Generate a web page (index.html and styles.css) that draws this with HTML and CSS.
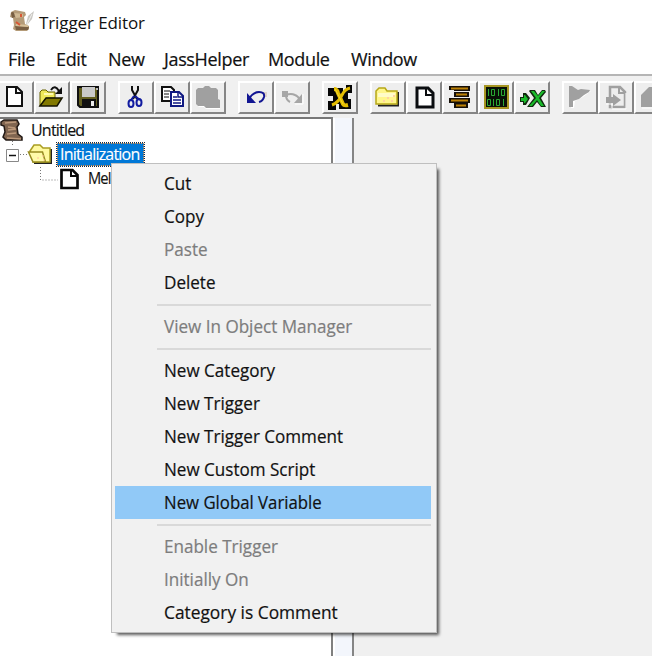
FILE: index.html
```html
<!DOCTYPE html>
<html lang="en">
<head>
<meta charset="utf-8">
<title>Trigger Editor</title>
<link rel="stylesheet" href="styles.css">
</head>
<body>
<div class="window">
  <header class="titlebar">
    <svg class="app-icon" width="26" height="26" viewBox="0 0 26 26"><path d="M17 15l2-8 6-5-2 8-5 6z" fill="#c9c7c2"/><path d="M18 15l5-10" stroke="#f1f0ed"/><path d="M2 3l4-2 10 2 1 3-2 2 1 7 4 2v3l-2 2H7l-3-2 1-4-1-7-3-1z" fill="#b49b78"/><path d="M5 4l9 1v3l-7 1z" fill="#d0b994"/><path d="M2 4q2-2 3 0l1 4-3 1zM6 17l14 1-1 3H7z" fill="#795f43"/><path d="M7 16l12 1" stroke="#d7c099" stroke-width="2"/><path d="M12 5v3M7 13l4 3" stroke="#d95735" stroke-width="2"/></svg>
    <span>Trigger Editor</span>
  </header>
  <nav class="menubar">
    <span class="m-file">File</span><span class="m-edit">Edit</span><span class="m-new">New</span><span class="m-jass">JassHelper</span><span class="m-module">Module</span><span class="m-window">Window</span>
  </nav>
  <div class="toolbar">
    <div class="group">
      <button class="tool"><svg viewBox="0 0 36 33"><path d="M9 6h10l5 5v14H9z" fill="#fff" stroke="#111" stroke-width="2"/><path d="M18 6v6h6" fill="none" stroke="#111" stroke-width="2"/></svg></button>
      <button class="tool"><svg viewBox="0 0 36 33"><path d="M6 25V11l2-2h4l2 2h7v6H12z" fill="#eee85a" stroke="#666000"/><path d="M10 12h9v2h-9z" fill="#fffbb0"/><path d="M6 25l6-8h16l-5 8z" fill="#827900" stroke="#161500" stroke-width="1.5"/><path d="M17 9q4-6 8 1" fill="none" stroke="#111" stroke-width="2"/><path d="M28 6v7h-7z" fill="#111"/></svg></button>
      <button class="tool"><svg viewBox="0 0 36 33"><path d="M8 6h20v20H10l-2-2z" fill="#625e20" stroke="#111" stroke-width="2"/><path d="M12 6h13v10H12z" fill="#c9c9c9"/><path d="M12 18h14v8H12z" fill="#111"/><path d="M21 20h3v5h-3z" fill="#eee"/><path d="M26 7h2v2h-2z" fill="#bbb"/></svg></button>
    </div>
    <div class="group">
      <button class="tool"><svg viewBox="0 0 36 33"><path d="M14 5v4l5 9M20 5v4l-5 9" fill="none" stroke="#111" stroke-width="2"/><path d="M16 15l-3 4M17 15l5 4" stroke="#111ba0" stroke-width="2"/><ellipse cx="13" cy="22.500" rx="2.500" ry="3.500" fill="none" stroke="#111ba0" stroke-width="2"/><ellipse cx="21" cy="21.500" rx="2.500" ry="3.500" fill="none" stroke="#111ba0" stroke-width="2"/></svg></button>
      <button class="tool"><svg viewBox="0 0 36 33"><path d="M8 6h9l3 3v11H8z" fill="#fff" stroke="#111" stroke-width="2"/><path d="M10 10h6M10 13h5M10 16h5" stroke="#111"/><path d="M17 11h8l4 4v10H17z" fill="#fff" stroke="#101982" stroke-width="2"/><path d="M24 11v5h5M19 16h4M19 19h8M19 22h8" fill="none" stroke="#101982" stroke-width="1.500"/></svg></button>
      <button class="tool"><svg viewBox="0 0 36 33"><path d="M8 9h5l2-2h5l2 2h6v10h2v9H16l-2-2H9l-2-2V9z" fill="#fff"/><path d="M8 7h5l2-2h4l2 2h5l2 2v9l2 1v8H16l-2-2H8l-2-2V9z" fill="#a0a0a0"/></svg></button>
    </div>
    <div class="group">
      <button class="tool"><svg viewBox="0 0 36 33"><path d="M25 11h4v5h-2z" fill="#dfd2ca"/><path d="M11 18q4-7 10-7 6 0 5 5-1 4-5 5" fill="none" stroke="#111592" stroke-width="2"/><path d="M9 12v10h9z" fill="#111592"/></svg></button>
      <button class="tool"><svg viewBox="0 0 36 33"><path d="M12 14q5-2 9 0 3 1 5 5M12 14q0 5 4 7" fill="none" stroke="#a6a6a6" stroke-width="2"/><path d="M8 10h6v6H8zM28 13v9h-8z" fill="#a6a6a6"/><path d="M21 23h8V13" fill="none" stroke="#fff"/></svg></button>
    </div>
    <div class="group">
      <button class="tool"><svg viewBox="0 0 36 33"><path d="M6 7h15v4h3V4h6v8h-4v6h3v10H17v-5h-3v6H6v-9h5v-5H6z" fill="#050505"/><path d="M12 8q3 0 4 4l5 11q1 2 5 1" fill="none" stroke="#e4bd00" stroke-width="4"/><path d="M28 7q-5 1-8 7-4 8-10 10" fill="none" stroke="#e4bd00" stroke-width="3"/><path d="M13 8l8 15" fill="none" stroke="#f4da31"/></svg></button>
    </div>
    <div class="group">
      <button class="tool"><svg viewBox="0 0 36 33"><path d="M8 24.500h20V11" fill="none" stroke="#222" stroke-width="2"/><path d="M6 23V10l3-3h6l2 3h10v13z" fill="#fff68c" stroke="#b7a817" stroke-width="1.500"/><path d="M8 12h17v4H8z" fill="#fffbc8"/><path d="M13 20h2m2-3h2m2 3h2m0-5h2" stroke="#ffd2a0" stroke-width="2"/></svg></button>
      <button class="tool"><svg viewBox="0 0 36 33"><path d="M11 7h11l5 5v14H11z" fill="#fff" stroke="#0b0d10" stroke-width="3"/><path d="M20 7v7h7" fill="none" stroke="#0b0d10" stroke-width="2"/></svg></button>
      <button class="tool"><svg viewBox="0 0 36 33"><path d="M7 5h21v5H12V9H7zM12 11h15v5H12zM7 17h21v5H7zM12 22h14v5H12z" fill="#16100a"/><path d="M9 6.500h17v2H9zM14 12.500h11v2H14zM9 18.500h17v2H9zM14 23.500h10v2H14z" fill="#bd8207"/></svg></button>
      <button class="tool"><svg viewBox="0 0 36 33"><path d="M7 5h23v22H7z" fill="#081006" stroke="#a69621" stroke-width="2"/><path d="M10.500 8v7M13.500 8.500h3v6h-3zM20.500 8v7M23.500 8.500h3v6h-3zM9.500 18.500h3v6h-3zM15.500 18v7M18.500 18.500h3v6h-3zM25.500 18v7" fill="none" stroke="#28a832"/></svg></button>
      <button class="tool"><svg viewBox="0 0 36 33"><path d="M16 9h5l3 5 4-5h3l1 2-5 6 5 9h-5l-4-5-4 5h-6l7-9-5-7z" fill="#102b0f"/><path d="M17 10h3l4 5 4-5h3l-6 7 5 8h-3l-4-6-5 6h-3l7-8z" fill="#19bb2a"/><path d="M9 12h3l4 5-4 7H9v-3H6v-5h3z" fill="#102b0f"/><path d="M10 14h1l3 4-3 4h-1v-2H7v-3h3z" fill="#19bb2a"/></svg></button>
    </div>
    <div class="group">
      <button class="tool"><svg viewBox="0 0 36 33"><path d="M9 7h3l6 3h11l-8 6-8 4-1 7H9z" fill="#fff"/><path d="M7 5h3l6 4 3-1 9 1-1 2-5 3-5 4-6 2v6H7z" fill="#a0a0a0"/></svg></button>
      <button class="tool"><svg viewBox="0 0 36 33"><path d="M12 6h10l5 5v15H12z" fill="#eee" stroke="#a0a0a0" stroke-width="2.500"/><path d="M21 6v6h6" fill="none" stroke="#a0a0a0" stroke-width="2"/><path d="M8 16h7v-3l8 6-8 6v-3H8z" fill="#a0a0a0"/><path d="M8 23h6v4M14 28h14V12" fill="none" stroke="#fff"/></svg></button>
      <button class="tool"><svg viewBox="0 0 36 33"><path d="M7 14l8-8h9v20H7z" fill="#a0a0a0"/><path d="M8 27h16" stroke="#fff"/></svg></button>
    </div>
  </div>
  <main class="workspace">
    <section class="tree">
      <div class="row root"><svg width="26" height="24" viewBox="0 0 26 24"><path d="M1 3l3-2h13l2 4-2 3 1 7 4 3v3H6l-3-3 2-5-1-6-3-1z" fill="#806550" stroke="#211915" stroke-width="1.500"/><path d="M5 4l11-1M8 8l7 1M8 11l8-1M7 15l9-1M7 19l14 1" stroke="#bd9a7c" stroke-width="1.500"/></svg><span>Untitled</span></div>
      <div class="row category"><svg width="54" height="26" viewBox="0 0 54 26"><path d="M12.500 0v6M20 13.500h9" stroke="#777" stroke-dasharray="1 2"/><path d="M6.500 8.500h12v12h-12z" fill="#fff" stroke="#888"/><path d="M9 14.500h7" stroke="#111" stroke-width="1.500"/><path d="M34 22h17V8" fill="none" stroke="#222" stroke-width="2"/><path d="M30 10l4-6h6l3 3h7v14H33z" fill="#fff9a0" stroke="#a99d22" stroke-width="1.500"/><path d="M28.500 11h14l3 10H33z" fill="#fffbaa" stroke="#968b20" stroke-width="1.500"/><path d="M37 17h2m3-2h2m-1 4h2" stroke="#ffc29c"/></svg><span class="selected">Initialization</span></div>
      <div class="row trigger"><svg width="84" height="24" viewBox="0 0 84 24"><path d="M40.500 0v13H58" fill="none" stroke="#777" stroke-dasharray="1 2"/><path d="M61.500 3h11l5 5v13h-16z" fill="#fff" stroke="#080808" stroke-width="2.700"/><path d="M71 3v6h6" fill="none" stroke="#080808" stroke-width="2"/></svg><span>Melee</span></div>
    </section>
    <div class="splitter"></div>
    <section class="canvas"></section>
  </main>
</div>
<div class="popup">
  <div class="item"><span>Cut</span></div>
  <div class="item"><span>Copy</span></div>
  <div class="item disabled"><span>Paste</span></div>
  <div class="item"><span>Delete</span></div>
  <div class="sep"></div>
  <div class="item disabled"><span>View In Object Manager</span></div>
  <div class="sep"></div>
  <div class="item"><span>New Category</span></div>
  <div class="item"><span>New Trigger</span></div>
  <div class="item"><span>New Trigger Comment</span></div>
  <div class="item"><span>New Custom Script</span></div>
  <div class="item active"><span>New Global Variable</span></div>
  <div class="sep"></div>
  <div class="item disabled"><span>Enable Trigger</span></div>
  <div class="item disabled"><span>Initially On</span></div>
  <div class="item wide"><span>Category is Comment</span></div>
</div>
</body>
</html>
```

FILE: styles.css
```css
* { box-sizing: border-box; }
body { margin: 0; overflow: hidden; font-family: "Open Sans", "Noto Sans", sans-serif; color: #111; }
.window { width: 652px; height: 656px; display: flex; flex-direction: column; background: #fff; }
.titlebar { height: 46px; display: flex; align-items: center; padding-left: 9px; font-size: 17px; }
.titlebar .app-icon { margin-top: -2px; }
.titlebar span { margin-left: 4px; letter-spacing: -.1px; transform: translateY(-1px); }
.menubar { height: 30px; display: flex; align-items: center; padding-left: 8px; padding-bottom: 2px; font-size: 18px; border-bottom: 2px solid #b5b5b5; -webkit-text-stroke: .2px; }
.menubar span { white-space: nowrap; letter-spacing: -.35px; }
.m-file { width: 48px; }
.m-edit { width: 52px; }
.m-new { width: 56px; }
.m-jass { width: 104px; }
.m-module { width: 83px; }
.toolbar { height: 41px; flex: none; display: flex; gap: 12px; padding-top: 5px; margin-left: -2px; background: #f0f0f0; overflow: hidden; }
.group { display: flex; flex: none; }
.tool { width: 36px; height: 33px; padding: 0; flex: none; border: solid; border-width: 2px; border-color: #fff #858585 #858585 #fff; background: #eee; }
.tool svg { display: block; width: 36px; height: 33px; margin: -2px; }
.workspace { flex: 1; display: flex; background: #f0f0f0; }
.tree { width: 333px; background: #fff; border-top: 2px solid #777; border-right: 2px solid #808080; font-size: 16px; overflow: hidden; }
.row { display: flex; align-items: center; height: 24px; white-space: nowrap; letter-spacing: -.8px; -webkit-text-stroke: .15px; }
.root span { margin: -2px 0 0 5px; }
.category svg { margin-right: 3px; }
.category { margin-top: -1px; letter-spacing: -.8px; }
.trigger { margin-top: 1px; letter-spacing: -1px; }
.trigger span { margin: -2px 0 0 4px; transform: scaleX(.92); transform-origin: left; }
.selected { height: 23px; line-height: 21px; width: 87px; padding-left: 2px; color: #fff; background: #0078d7; border: 1px dotted #e58a36; outline: 1px dotted #252a35; outline-offset: 0; }
.splitter { width: 21px; background: #f3f6fc; border-left: 2px solid #fff; border-right: 2px solid #858585; margin-top: 1px; }
.canvas { flex: 1; background: #f0f0f0; }
.popup { position: absolute; left: 111px; top: 163px; width: 326px; height: 470px; padding: 3px; border: 1px solid #bfbfbf; background: #f1f1f1; box-shadow: 4px 4px 3px -2px rgba(0,0,0,.65); font-size: 18px; -webkit-text-stroke: .2px; }
.item { height: 33px; line-height: 32px; padding-left: 49px; white-space: nowrap; }
.item span { display: inline-block; transform: scaleX(.948); transform-origin: left; }
.item.wide span { transform: scaleX(.963); }
.item.active span { transform: scaleX(.932); }
.item.disabled { color: #7d7d7d; }
.item.active { margin-right: 2px; background: #91c9f7; }
.sep { height: 11px; padding-top: 5px; }
.sep::after { content: ""; display: block; height: 2px; margin-left: 42px; margin-right: 2px; background: #d9d9d9; }
```
